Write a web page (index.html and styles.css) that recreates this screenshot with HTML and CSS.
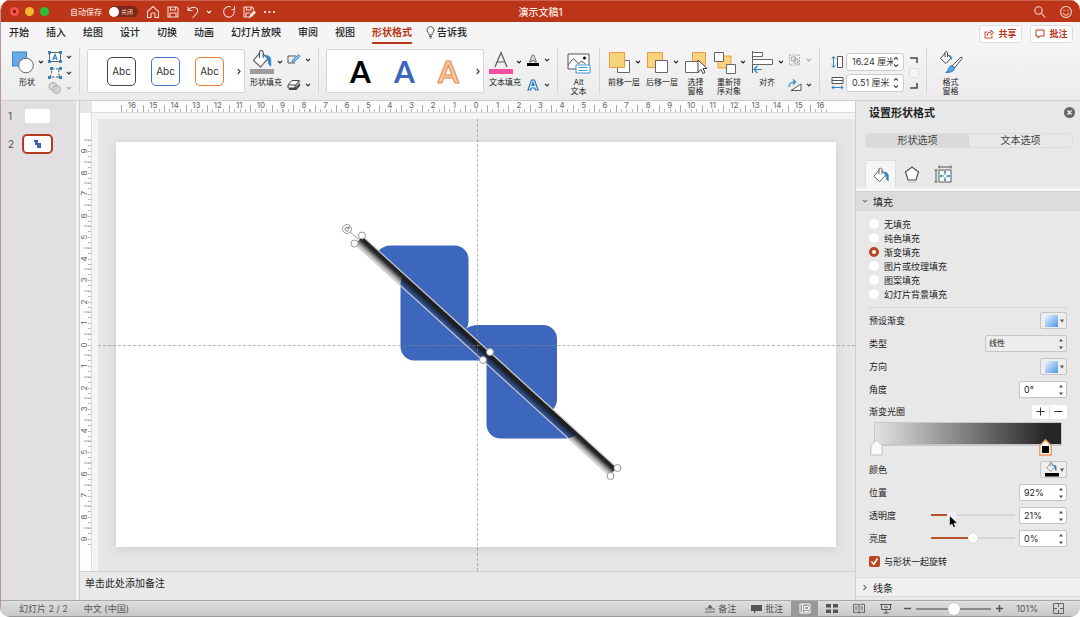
FILE: index.html
```html
<!DOCTYPE html>
<html lang="zh-CN">
<head>
    <meta charset="UTF-8">
    <meta name="viewport" content="width=device-width, initial-scale=1.0">
    <title>演示文稿1</title>
    <link rel="stylesheet" href="styles.css">
</head>
<body>
    <!-- shared icons -->
    <svg class="defs" width="0" height="0" aria-hidden="true">
        <symbol id="caret" viewBox="0 0 6 4"><path d="M1 .8 3 2.8 5 .8" fill="none" stroke="currentColor" stroke-width="1.2"/></symbol>
        <symbol id="bucket" viewBox="0 0 24 18">
            <path d="M10 2.5 3.5 10.5l7 6.5 7.5-8.5-5-4.5" fill="#fafafa" stroke="#555" stroke-width="1.1"/>
            <path d="M9.500 8V2.500q0-2 1.800-2t1.900 2V8" fill="none" stroke="#555" stroke-width="1.1"/>
            <path d="M14.500 5.500q6-.5 6.300 4.500v6q-2.500-1-2.500-4 0-4-3.800-6.500z" fill="#2f86c9" stroke="#2f86c9" stroke-width=".8"/>
        </symbol>
        <symbol id="spin" viewBox="0 0 6 12"><path d="M1 3.500 3 .8 5 3.500zM1 8.500 3 11.200 5 8.500z" fill="#555"/></symbol>
        <symbol id="spin-line" viewBox="0 0 6 12"><path d="M1 3.500 3 1.500 5 3.500M1 8.500 3 10.500 5 8.500" fill="none" stroke="#444" stroke-width="1.100"/></symbol>
        <symbol id="down" viewBox="0 0 4 4"><path d="M0 .5h4L2 3.800z" fill="#555"/></symbol>
    </svg>

    <div class="window">
        <header class="titlebar">
            <div class="lights"><i class="close"></i><i class="min"></i><i class="max"></i></div>
            <span class="autosave">自动保存</span>
            <button class="toggle"><i></i>关闭</button>
            <div class="quick">
                <button aria-label="主页"><svg width="14" height="14" viewBox="0 0 14 14"><path d="M1.500 6.500 7 1.500l5.500 5V12.500h-3.500V9q0-1-1-1H6q-1 0-1 1v3.500H1.500z"/></svg></button>
                <button aria-label="保存"><svg width="14" height="14" viewBox="0 0 14 14"><path d="M2 2h8.500L12 3.500V12H2zM4.500 2v3h5V2M4 12V8h6v4"/></svg></button>
                <button aria-label="撤销"><svg width="14" height="14" viewBox="0 0 14 14"><path d="M2 1.500v4h4.500M2 5.500Q5 1.500 9 2.500t2 5.500L6.500 13"/></svg></button>
                <svg class="quick-caret" width="6" height="4"><use href="#caret"/></svg>
                <button aria-label="重做"><svg width="14" height="14" viewBox="0 0 14 14"><path d="M9 2A5.300 5.300 0 1 0 12 5.500M9.500 4.500H12.500V1"/></svg></button>
                <button aria-label="另存"><svg width="14" height="14" viewBox="0 0 14 14"><path d="M7 12H2V2h8l1.500 1.500V5M4.500 2v3h4.500V2M4 12V8h4"/><path d="m7.500 12.500 1-3 3.500-3.500 1.300 1.500-3.500 3.800z" fill="#fff"/></svg></button>
                <button aria-label="更多"><svg width="14" height="14" viewBox="0 0 14 14"><path d="M2 7h2M6.500 7h2M11 7h2" stroke-width="1.800"/></svg></button>
            </div>
            <h1>演示文稿1</h1>
            <div class="quick right">
                <button aria-label="搜索"><svg width="14" height="14" viewBox="0 0 14 14"><circle cx="5.500" cy="5.500" r="3.700"/><path d="m8.300 8.300 4 4"/></svg></button>
                <button aria-label="反馈"><svg width="14" height="14" viewBox="0 0 14 14"><circle cx="7" cy="7" r="5.500"/><path d="M4 8q3 4.500 6 0M5 4.800v1.400M9 4.800v1.400"/></svg></button>
            </div>
        </header>

        <nav class="tabs">
            <a href="#">开始</a>
            <a href="#">插入</a>
            <a href="#">绘图</a>
            <a href="#">设计</a>
            <a href="#">切换</a>
            <a href="#">动画</a>
            <a href="#">幻灯片放映</a>
            <a href="#">审阅</a>
            <a href="#">视图</a>
            <a href="#" class="active">形状格式</a>
            <a href="#" class="tell"><svg width="9" height="13" viewBox="0 0 9 13"><path d="M3 9Q3 7.500 1.800 6.300A3.500 3.500 0 1 1 7.200 6.300Q6 7.500 6 9zM3 10.500h3M3.500 12h2" fill="none" stroke="#555"/></svg>告诉我</a>
            <div class="share">
                <button><svg width="10" height="10" viewBox="0 0 10 10"><path d="M3.500 3H1v6h7V6.500M3 7q0-4 4-4V1l2.500 3L7 6V4.500" fill="none" stroke="#bc3518" stroke-width=".9"/></svg>共享</button>
                <button><svg width="10" height="10" viewBox="0 0 10 10"><path d="M1 1h8v6H5L3 9V7H1z" fill="none" stroke="#bc3518"/></svg>批注</button>
            </div>
        </nav>

        <section class="ribbon">
            <div class="group">
                <button class="tool">
                    <span class="pic">
                        <svg width="24" height="24" viewBox="0 0 24 24"><rect x="1.500" y="2" width="14" height="14" fill="#67aae6" stroke="#3a86c8"/><circle cx="15" cy="15.500" r="7.300" fill="#fff" stroke="#666"/></svg>
                        <svg width="6" height="4"><use href="#caret"/></svg>
                    </span>
                    形状
                </button>
                <div class="minis three">
                    <button class="mini" aria-label="文本框"><svg width="14" height="12" viewBox="0 0 14 12"><rect x="1.500" y="1.500" width="11" height="9" fill="#fff" stroke="#666"/><path d="M4.800 9 7 3.300 9.200 9M5.500 7.300h3" fill="none" stroke="#2f86c9" stroke-width="1.200"/><path d="M0 0h3v3H0zM11 0h3v3h-3zM0 9h3v3H0zM11 9h3v3h-3z" fill="#2f86c9"/></svg><svg width="6" height="4"><use href="#caret"/></svg></button>
                    <button class="mini" aria-label="编辑形状"><svg width="14" height="12" viewBox="0 0 14 12"><path d="M3.500 2h8.500Q9 5 12 10H1.500q3-3 2-8" fill="#fff" stroke="#555" stroke-dasharray="3 1.500"/><path d="M2 0h3v3H2zM11 0h3v3h-3zM0 9h3v3H0zM11 9h3v3h-3z" fill="#2f86c9"/></svg><svg width="6" height="4"><use href="#caret"/></svg></button>
                    <button class="mini off" aria-label="合并形状"><svg width="14" height="12" viewBox="0 0 14 12"><circle cx="5" cy="4.500" r="4" fill="#ddd" stroke="#aaa"/><circle cx="8.500" cy="7.500" r="4" fill="#ccc" fill-opacity=".6" stroke="#aaa"/></svg><svg width="6" height="4"><use href="#caret"/></svg></button>
                </div>
            </div>

            <div class="group">
                <div class="gallery">
                    <button class="style black">Abc</button>
                    <button class="style blue">Abc</button>
                    <button class="style orange">Abc</button>
                    <svg class="more" width="4" height="7" viewBox="0 0 4 7"><path d="m.8 1 2.200 2.500L.8 6" fill="none" stroke="#444" stroke-width="1.200"/></svg>
                </div>
                <button class="tool">
                    <span class="pic">
                        <svg width="24" height="24" viewBox="0 0 24 24"><use href="#bucket" width="24" height="18"/><path d="M0 19h24v5H0z" fill="#9c9c9c"/></svg>
                        <svg width="6" height="4"><use href="#caret"/></svg>
                    </span>
                    形状填充
                </button>
                <div class="minis">
                    <button class="mini" aria-label="形状轮廓"><svg width="14" height="12" viewBox="0 0 14 12"><path d="M9 2H1v7h7" fill="none" stroke="#555"/><path d="m5 8 1-2.500L11.500.8 13 2.300 7.500 7.500z" fill="#8ec5ee" stroke="#2f86c9"/></svg><svg width="6" height="4"><use href="#caret"/></svg></button>
                    <button class="mini" aria-label="形状效果"><svg width="14" height="12" viewBox="0 0 14 12"><path d="m1 6 4-4.500h7L9 6zM1 6v3h7V6M8 9l4-4.500v-3" fill="#fff" stroke="#444"/><path d="M2 10h7l4-4.500" fill="none" stroke="#444" stroke-width="1.800"/></svg><svg width="6" height="4"><use href="#caret"/></svg></button>
                </div>
            </div>

            <div class="group">
                <div class="gallery">
                    <button class="letter">A</button>
                    <button class="letter blue">A</button>
                    <button class="letter orange">A</button>
                    <svg class="more" width="4" height="7" viewBox="0 0 4 7"><path d="m.8 1 2.200 2.500L.8 6" fill="none" stroke="#444" stroke-width="1.200"/></svg>
                </div>
                <button class="tool">
                    <span class="pic">
                        <svg width="24" height="24" viewBox="0 0 24 24"><path d="M6 17 12 2.500 18 17M8 12h8" fill="none" stroke="#555" stroke-width="1.200"/><path d="M0 19h24v5H0z" fill="#f5509f"/></svg>
                        <svg width="6" height="4"><use href="#caret"/></svg>
                    </span>
                    文本填充
                </button>
                <div class="minis">
                    <button class="mini" aria-label="文本轮廓"><svg width="14" height="12" viewBox="0 0 14 12"><path d="M3.500 8 6.300 1h1.400l2.800 7H8.800l-.5-1.500H5.700L5.200 8z" fill="#ddd" stroke="#555" stroke-width=".8"/><path d="M1 9h12v3H1z"/></svg><svg width="6" height="4"><use href="#caret"/></svg></button>
                    <button class="mini" aria-label="文本效果"><svg width="14" height="12" viewBox="0 0 14 12"><path d="M2 11 5.500 1h3L12 11H9.500L8.800 9H5.200l-.7 2zM6 6.500h2L7 3.500z" fill="#e6f2fb" stroke="#2b78c5" stroke-width="1.200"/></svg><svg width="6" height="4"><use href="#caret"/></svg></button>
                </div>
            </div>

            <div class="group narrow">
                <button class="tool slim">
                    <span class="pic"><svg width="24" height="24" viewBox="0 0 24 24"><path d="M1 4h21v15H1z" fill="#fafafa" stroke="#555"/><path d="m1 15 5.500-6.500 5 5.500 3-3 4 3" fill="none" stroke="#555"/><circle cx="17.500" cy="8" r="1.500"/><path d="M9 15h14v8H9z" fill="#fff" stroke="#3a96d8"/><path d="M11.500 17.500h9M11.500 20.500h9" stroke="#3a96d8"/></svg></span>
                    Alt<br>文本
                </button>
            </div>

            <div class="group">
                <button class="tool">
                    <span class="pic">
                        <svg width="24" height="24" viewBox="0 0 24 24"><path d="M9.500 10.500h12v12h-12z" fill="#fff" stroke="#666"/><path d="M1.500 2.500h15v15h-15z" fill="#f9d27c" stroke="#e99a43"/></svg>
                        <svg width="6" height="4"><use href="#caret"/></svg>
                    </span>
                    前移一层
                </button>
                <button class="tool">
                    <span class="pic">
                        <svg width="24" height="24" viewBox="0 0 24 24"><path d="M1.500 2.500h15v15h-15z" fill="#f9d27c" stroke="#e99a43"/><path d="M9.500 10.500h12v12h-12z" fill="#fff" stroke="#666"/></svg>
                        <svg width="6" height="4"><use href="#caret"/></svg>
                    </span>
                    后移一层
                </button>
                <button class="tool slim">
                    <span class="pic"><svg width="24" height="24" viewBox="0 0 24 24"><path d="M8.500 2.500h13v13h-13z" fill="#f9d27c" stroke="#e99a43"/><path d="M1.500 11.500h13v11h-13z" fill="#fff" stroke="#666"/><path d="M14 10v12l3-2.500 2 4 2-1-2-4h4z" fill="#fff" stroke="#444"/></svg></span>
                    选择<br>窗格
                </button>
                <button class="tool">
                    <span class="pic">
                        <svg width="24" height="24" viewBox="0 0 24 24"><path d="M5 6h13v12H5z" fill="#f9d27c" stroke="#e99a43"/><path d="M1.500 2.500h9v9h-9zM13.500 14.500h9v9h-9z" fill="#fff" stroke="#666"/></svg>
                        <svg width="6" height="4"><use href="#caret"/></svg>
                    </span>
                    重新排<br>序对象
                </button>
                <button class="tool">
                    <span class="pic">
                        <svg width="24" height="24" viewBox="0 0 24 24"><path d="M1.500 1v22" stroke="#555"/><path d="M1.500 2.500h10v4h-10zM1.500 9.500h20v5h-20z" fill="#fff" stroke="#666"/><path d="M11 19.500H3M6.500 16 3 19.500 6.500 23" fill="none" stroke="#2f86c9" stroke-width="1.200"/></svg>
                        <svg width="6" height="4"><use href="#caret"/></svg>
                    </span>
                    对齐
                </button>
                <div class="minis">
                    <button class="mini off" aria-label="组合"><svg width="14" height="12" viewBox="0 0 14 12"><path d="M1.500 1h10v10h-10z" fill="none" stroke="#aaa" stroke-dasharray="2 1"/><path d="M3.500 3h4v4h-4zM6 5h4v4H6z" fill="none" stroke="#aaa"/></svg><svg width="6" height="4"><use href="#caret"/></svg></button>
                    <button class="mini" aria-label="旋转"><svg width="14" height="12" viewBox="0 0 14 12"><path d="M3 11.500h10V5z" fill="#fff" stroke="#555"/><path d="M1 8q0-5 6-5M5 .5 7.500 3 5 5.500" fill="none" stroke="#2f86c9" stroke-width="1.200"/></svg><svg width="6" height="4"><use href="#caret"/></svg></button>
                </div>
            </div>

            <div class="group">
                <div class="sizes">
                    <label for="shapeHeight" aria-label="高度"><svg width="13" height="14" viewBox="0 0 13 14"><path d="M6.500 1.500h5v11h-5z" fill="#fff" stroke="#555"/><path d="M2.500 2v10M.8 3.800 2.500 1.500l1.700 2.300M.8 10.200l1.700 2.300 1.700-2.300" fill="none" stroke="#2f86c9"/></svg></label>
                    <span class="measure"><input id="shapeHeight" type="text" value="16.24 厘米"><svg width="6" height="12"><use href="#spin-line"/></svg></span>
                    <label for="shapeWidth" aria-label="宽度"><svg width="13" height="14" viewBox="0 0 13 14"><path d="M1 1.500h11v6H1zM1 4.500h11" fill="#fff" stroke="#555"/><path d="M1 11.500h11M3 9.800.8 11.500 3 13.200M10 9.800l2.200 1.700-2.200 1.700" fill="none" stroke="#2f86c9"/></svg></label>
                    <span class="measure"><input id="shapeWidth" type="text" value="0.51 厘米"><svg width="6" height="12"><use href="#spin-line"/></svg></span>
                </div>
                <div class="ratio">
                    <svg width="8" height="6" viewBox="0 0 8 6"><path d="M0 1h7v5" fill="none" stroke="#444" stroke-width="1.500"/></svg>
                    <input type="checkbox" aria-label="锁定纵横比">
                    <svg width="8" height="6" viewBox="0 0 8 6"><path d="M0 5h7V0" fill="none" stroke="#444" stroke-width="1.500"/></svg>
                </div>
            </div>

            <div class="group last">
                <button class="tool slim">
                    <span class="pic"><svg width="24" height="24" viewBox="0 0 24 24"><path d="M6 3 1.500 8.500 7 13.500 12 8 8 4" fill="#fff" stroke="#444"/><path d="M6 7V2.500Q7 0 8.500 2.500V7" fill="none" stroke="#444"/><path d="M10 5q3 0 3 5l-2-2z" fill="#2f86c9"/><path d="m13 16 9-9q1.500 0 1 1.500L15.500 18z" fill="#fff" stroke="#555"/><path d="M13 15.500q2.500.5 2.500 3-1 4-8.500 4 2-1.500 2.500-4 1-2.500 3.500-3z" fill="#5aa6e6" stroke="#2774b8"/></svg></span>
                    格式<br>窗格
                </button>
            </div>
        </section>

        <div class="body">
            <aside class="thumbs">
                <a href="#"><span>1</span><i></i></a>
                <a href="#" class="selected"><span>2</span><i><svg width="9" height="8" viewBox="0 0 9 8"><path d="M1 0h4v3h3v5H4V5H2V2H1z" fill="#3c66bd"/></svg></i></a>
            </aside>

            <main class="editor">
                <div class="corner"></div>
                <div class="ruler across">
                    <span>16</span><span>15</span><span>14</span><span>13</span><span>12</span><span>11</span><span>10</span><span>9</span><span>8</span><span>7</span><span>6</span><span>5</span><span>4</span><span>3</span><span>2</span><span>1</span><span>0</span><span>1</span><span>2</span><span>3</span><span>4</span><span>5</span><span>6</span><span>7</span><span>8</span><span>9</span><span>10</span><span>11</span><span>12</span><span>13</span><span>14</span><span>15</span><span>16</span>
                </div>
                <div class="ruler down">
                    <span>9</span><span>8</span><span>7</span><span>6</span><span>5</span><span>4</span><span>3</span><span>2</span><span>1</span><span>0</span><span>1</span><span>2</span><span>3</span><span>4</span><span>5</span><span>6</span><span>7</span><span>8</span><span>9</span>
                </div>
                <div class="workspace">
                    <div class="slide">
                        <svg viewBox="116 142 720 405" width="100%" height="100%">
                            <defs>
                                <linearGradient id="barFill" x1="0" y1="0" x2="0" y2="1">
                                    <stop offset="0" stop-color="#222"/>
                                    <stop offset=".35" stop-color="#1a1a1a" stop-opacity=".95"/>
                                    <stop offset=".65" stop-color="#111" stop-opacity=".5"/>
                                    <stop offset="1" stop-color="#111" stop-opacity=".1"/>
                                </linearGradient>
                            </defs>
                            <g fill="#3d67bd">
                                <path d="M378.500 251Q383 245.500 391 245.500H454.500a14 14 0 0 1 14 14V322q0 4-2.500 6.500L490 350 484 360.500H414.500a14 14 0 0 1-14-14V284q0-5 3-9z"/>
                                <path d="M466 328.500Q471 325 478 325H543a14 14 0 0 1 14 14V399q0 6-4 10.500L577 433q-5 5.500-11 5.500H500.500a14 14 0 0 1-14-14V362L484 360.500z"/>
                            </g>
                            <g transform="translate(486 356) rotate(42.300)">
                                <rect x="-172" y="-5.500" width="344" height="11" fill="url(#barFill)"/>
                                <path d="M-172-5.500H172M-172 5.500H172" stroke="#ccc" stroke-width="1.200"/>
                            </g>
                            <path d="m350 232 9 7.500" stroke="#999"/>
                            <g fill="#fff" stroke="#999">
                                <circle cx="347" cy="229" r="4.500"/>
                                <path d="M348.800 228A2 2 0 1 0 348.800 230.200M349.200 226.500v2h-2" fill="none" stroke="#777"/>
                                <circle cx="362" cy="235.500" r="3.500"/>
                                <circle cx="354.500" cy="243.500" r="3.500"/>
                                <circle cx="490" cy="352" r="3.500"/>
                                <circle cx="483" cy="360" r="3.500"/>
                                <circle cx="617.500" cy="468" r="3.500"/>
                                <circle cx="610.500" cy="476" r="3.500"/>
                            </g>
                        </svg>
                    </div>
                    <i class="guide-v"></i>
                    <i class="guide-h"></i>
                </div>
                <div class="notes">单击此处添加备注</div>
            </main>

            <aside class="panel">
                <div class="panel-head">
                    <h2>设置形状格式</h2>
                    <button aria-label="关闭"><svg width="11" height="11" viewBox="0 0 11 11"><circle cx="5.500" cy="5.500" r="5.500" fill="#666"/><path d="m3.500 3.500 4 4M7.500 3.500l-4 4" stroke="#fff" stroke-width="1.200"/></svg></button>
                </div>
                <div class="segments">
                    <button class="on">形状选项</button>
                    <button>文本选项</button>
                </div>
                <div class="icon-tabs">
                    <button class="on" aria-label="填充与线条"><svg width="20" height="16" viewBox="0 0 24 18"><use href="#bucket"/></svg></button>
                    <button aria-label="效果"><svg width="16" height="17" viewBox="0 0 16 17"><path d="m8 1 6.500 5L12 14H4L1.500 6z" fill="#fafafa" stroke="#555" stroke-width="1.200"/><path d="M4 16h8" stroke="#bbb"/></svg></button>
                    <button aria-label="大小与属性"><svg width="18" height="18" viewBox="0 0 18 18"><path d="M5 5h12v12H5z" fill="#fff" stroke="#555"/><path d="M5 2h12M5 .5v3M17 .5v3M2 5v12M.5 5h3M.5 17h3" stroke="#555"/><path d="M11 6v4M11 12v4M6 11h4M12 11h4" stroke="#2f86c9"/><path d="m11 5.800 1.700 2H9.300zM11 16.200l1.700-2H9.300zM5.800 11l2-1.700v3.400zM16.200 11l-2-1.700v3.400z" fill="#2f86c9"/></svg></button>
                </div>

                <button class="section"><svg width="6" height="4"><use href="#caret"/></svg>填充</button>
                <div class="fill-kinds">
                    <label><input type="radio" name="fill">无填充</label>
                    <label><input type="radio" name="fill">纯色填充</label>
                    <label><input type="radio" name="fill" checked>渐变填充</label>
                    <label><input type="radio" name="fill">图片或纹理填充</label>
                    <label><input type="radio" name="fill">图案填充</label>
                    <label><input type="radio" name="fill">幻灯片背景填充</label>
                </div>

                <div class="rows">
                    <div class="row"><span>预设渐变</span><button class="swatch" aria-label="预设渐变"><i></i><svg width="4" height="4"><use href="#down"/></svg></button></div>
                    <div class="row"><label for="gradType">类型</label><span class="drop"><select id="gradType"><option>线性</option></select><svg width="6" height="12"><use href="#spin"/></svg></span></div>
                    <div class="row"><span>方向</span><button class="swatch" aria-label="方向"><i></i><svg width="4" height="4"><use href="#down"/></svg></button></div>
                    <div class="row"><label for="angle">角度</label><span class="stepper"><input id="angle" type="text" value="0°"><svg width="6" height="12"><use href="#spin"/></svg></span></div>
                    <div class="row short"><span>渐变光圈</span><span class="plusminus"><button aria-label="添加"><svg width="9" height="9" viewBox="0 0 9 9"><path d="M.5 4.500h8M4.500.5v8" stroke="#333"/></svg></button><button aria-label="删除"><svg width="9" height="9" viewBox="0 0 9 9"><path d="M.5 4.500h8" stroke="#333"/></svg></button></span></div>
                </div>

                <div class="ramp">
                    <button class="stop first" aria-label="光圈 1"><svg width="13" height="17" viewBox="0 0 13 17"><path d="M.8 6.500 6.500.8l5.700 5.700V16H.8z" fill="#fafafa" stroke="#bbb"/></svg></button>
                    <button class="stop second" aria-label="光圈 2"><svg width="13" height="17" viewBox="0 0 13 17"><path d="M.8 6.500 6.500.8l5.700 5.700V16H.8z" fill="#fff" stroke="#ee935a" stroke-width="1.400"/><path d="M3 7h7v7H3z"/></svg></button>
                </div>

                <div class="rows lower">
                    <div class="row"><span>颜色</span><button class="swatch" aria-label="颜色"><svg width="15" height="15" viewBox="0 0 15 15"><use href="#bucket" width="13" height="10"/><path d="M0 11h14v3.500H0z"/></svg><svg width="4" height="4"><use href="#down"/></svg></button></div>
                    <div class="row"><label for="pos">位置</label><span class="stepper"><input id="pos" type="text" value="92%"><svg width="6" height="12"><use href="#spin"/></svg></span></div>
                    <div class="row">
                        <label for="alpha">透明度</label>
                        <span class="slide-wrap">
                            <input id="alpha" class="faint" type="range" value="21" style="--fill: 21%">
                            <svg class="pointer" width="9" height="13" viewBox="0 0 9 13"><path d="M.5.500v10.500L3 9l1.500 3.500 2-.8L5 8.300h3.500z" stroke="#fff" stroke-width=".6"/></svg>
                        </span>
                        <span class="stepper"><input type="text" value="21%" aria-label="透明度"><svg width="6" height="12"><use href="#spin"/></svg></span>
                    </div>
                    <div class="row">
                        <label for="light">亮度</label>
                        <span class="slide-wrap"><input id="light" type="range" value="50" style="--fill: 50%"></span>
                        <span class="stepper"><input type="text" value="0%" aria-label="亮度"><svg width="6" height="12"><use href="#spin"/></svg></span>
                    </div>
                    <label class="check"><input type="checkbox" checked><svg width="11" height="11" viewBox="0 0 11 11"><path d="m2.500 5.500 2.300 2.700L8.500 2.500" fill="none" stroke="#fff" stroke-width="1.700"/></svg>与形状一起旋转</label>
                </div>
                <button class="section closed"><svg width="6" height="7" viewBox="0 0 6 7"><path d="m1.500 1 2.500 2.500L1.500 6" fill="none" stroke="currentColor" stroke-width="1.200"/></svg>线条</button>
            </aside>
        </div>

        <footer class="status">
            <span>幻灯片 2 / 2</span>
            <span>中文 (中国)</span>
            <div class="views">
                <button class="text"><svg width="10" height="9" viewBox="0 0 10 9"><path d="M0 5h10M0 8h10M3 3.500h4L5 1z" fill="#666" stroke="#666"/></svg>备注</button>
                <button class="text"><svg width="11" height="10" viewBox="0 0 11 10"><path d="M0 1h11v6H5L3 9.500V7H0z" fill="#555"/></svg>批注</button>
                <button class="view on" aria-label="普通视图"><svg width="12" height="11" viewBox="0 0 12 11"><path d="M1 1h10v9H1zM3.500 1v9M5.500 3.500h4v3h-4zM5.500 8.500h4" fill="none" stroke="#fff"/></svg></button>
                <button class="view" aria-label="浏览"><svg width="12" height="9" viewBox="0 0 12 9"><path d="M0 0h5v3.500H0zM7 0h5v3.500H7zM0 5.500h5V9H0zM7 5.500h5V9H7z" fill="#555"/></svg></button>
                <button class="view" aria-label="阅读"><svg width="12" height="11" viewBox="0 0 12 11"><path d="M6 2Q3.500.5.5 1.500v8Q3.500 8.500 6 10q2.500-1.500 5.500-.5v-8Q8.500.5 6 2zv8M2 4h2.500M2 6h2.500M7.500 4H10M7.500 6H10" fill="none" stroke="#666"/></svg></button>
                <button class="view" aria-label="放映"><svg width="12" height="11" viewBox="0 0 12 11"><path d="M0 1.500h12M1.500 1.500v5h9v-5M6 6.500V10M3.500 10h5M4 4h4" fill="none" stroke="#555"/></svg></button>
                <div class="zoom">
                    <button aria-label="缩小"><svg width="7" height="7" viewBox="0 0 7 7"><path d="M0 3.500h7" stroke="#555" stroke-width="1.500"/></svg></button>
                    <input type="range" value="50" aria-label="缩放">
                    <button aria-label="放大"><svg width="7" height="7" viewBox="0 0 7 7"><path d="M0 3.500h7M3.500 0v7" stroke="#555" stroke-width="1.500"/></svg></button>
                </div>
                <span class="percent">101%</span>
                <button aria-label="适应窗口"><svg width="11" height="11" viewBox="0 0 11 11"><path d="M.5.500h10v10H.5zM5.500 1v3M5.500 7v3M1 5.500h3M7 5.500h3" fill="none" stroke="#666"/></svg></button>
            </div>
        </footer>
    </div>
</body>
</html>
```

FILE: styles.css
```css
* {
    box-sizing: border-box;
}
body {
    margin: 0;
    background: #fff;
    color: #222;
    font-family: "Inter", "Noto Sans CJK SC", sans-serif;
    font-size: 9px;
}
button, input, select {
    font: inherit;
    color: inherit;
    margin: 0;
    padding: 0;
    border: 0;
    background: none;
}
a {
    color: inherit;
    text-decoration: none;
}
h1, h2 {
    margin: 0;
}
svg {
    display: block;
    flex: none;
}
.defs {
    position: absolute;
}
.window {
    display: flex;
    flex-direction: column;
    height: 100vh;
    border-left: 1px solid #b795a3;
    border-radius: 10px;
    overflow: hidden;
    background: #e8e8e8;
}

/* title bar */
.titlebar {
    display: flex;
    align-items: center;
    position: relative;
    flex: none;
    height: 22px;
    padding: 0 7px 0 9px;
    background: #bc3518;
    border-top: 1px solid #c9634c;
    color: #f5d5cc;
}
.lights {
    display: flex;
    gap: 6px;
}
.lights i {
    width: 9px;
    height: 9px;
    border-radius: 50%;
}
.lights .close {
    background: radial-gradient(#7a0f08 0 1px, #f4524a 2px);
}
.lights .min {
    background: #f6b62b;
}
.lights .max {
    background: #27bf38;
}
.autosave {
    margin-left: 21px;
    font-size: 8px;
    font-weight: 500;
}
.toggle {
    display: flex;
    align-items: center;
    gap: 2px;
    width: 29px;
    height: 11px;
    margin-left: 7px;
    border-radius: 6px;
    background: #7b2818;
    font-size: 6px;
    line-height: 11px;
}
.toggle i {
    width: 10px;
    height: 10px;
    border-radius: 50%;
    background: #fff;
}
.quick {
    display: flex;
    align-items: center;
    gap: 6px;
    margin-left: 8px;
}
.quick button svg {
    fill: none;
    stroke: #f6d8d0;
    stroke-width: 1.1;
}
.quick-caret {
    margin-right: 4px;
    color: #fff;
}
.quick.right {
    gap: 12px;
    margin-left: auto;
}
.titlebar h1 {
    position: absolute;
    left: 50%;
    transform: translateX(-50%);
    color: #fbe9e4;
    font-size: 10px;
    font-weight: 500;
}

/* tabs */
.tabs {
    display: flex;
    align-items: center;
    flex: none;
    gap: 17px;
    height: 23px;
    padding: 0 7px 0 8px;
    background: #f5f5f5;
    font-size: 10px;
    font-weight: 500;
    line-height: 19px;
}
.tabs a {
    border-bottom: 2px solid transparent;
}
.tabs .active {
    color: #bc3518;
    border-color: #bc3518;
    font-weight: 700;
}
.tell {
    display: flex;
    align-items: center;
    gap: 2px;
    margin-left: -3px;
}
.share {
    display: flex;
    gap: 8px;
    margin-left: auto;
}
.share button {
    display: flex;
    align-items: center;
    justify-content: center;
    gap: 4px;
    width: 43px;
    height: 18px;
    border: 1px solid #ddd;
    border-radius: 3px;
    background: #fff;
    color: #bc3518;
    font-size: 9px;
    font-weight: 700;
}

/* ribbon */
.ribbon {
    display: flex;
    flex: none;
    height: 56px;
    padding: 3px 0 6px 2px;
    background: linear-gradient(#f5f5f5, #ebebeb);
    border-bottom: 1px solid #cfcfcf;
    color: #333;
}
.group {
    display: flex;
    gap: 4px;
    padding: 0 7px;
    border-right: 1px solid #d6d6d6;
}
.group.last {
    border: 0;
    padding-left: 11px;
}
.group.narrow {
    padding: 0 8px;
}
.tool {
    display: flex;
    flex-direction: column;
    align-items: center;
    justify-content: flex-start;
    width: 34px;
    color: #222;
    font-size: 8px;
    line-height: 9px;
    white-space: nowrap;
}
.tool.slim {
    width: 25px;
}
.pic {
    display: flex;
    align-items: center;
    gap: 3px;
    margin: 2px 0 4px;
}
.minis {
    display: flex;
    flex-direction: column;
    justify-content: space-between;
    padding: 6px 0 3px;
}
.minis.three {
    padding: 3px 0 0;
}
.mini {
    display: flex;
    align-items: center;
    gap: 4px;
}
.mini.off {
    color: #aaa;
}
.gallery {
    display: flex;
    align-items: center;
    gap: 15px;
    width: 158px;
    height: 44px;
    margin-top: 1px;
    padding: 0 4px 0 19px;
    border: 1px solid #d5d5d5;
    border-radius: 2px;
    background: #fff;
}
.more {
    margin-left: auto;
}
.gallery button {
    flex: none;
    width: 29px;
}
.gallery .orange + .more {
    margin-left: -2px;
}
.style {
    height: 29px;
    border: 1px solid #444;
    border-radius: 5px;
    color: #333;
    font-size: 10px;
}
.style.blue {
    border-color: #4472c4;
}
.style.orange {
    border-color: #ed7d31;
}
.letter {
    color: #000;
    font-family: "Lato", sans-serif;
    font-size: 30px;
    font-weight: 700;
    line-height: 42px;
}
.letter.blue {
    color: #3d67bd;
}
.letter.orange {
    color: #f8c8a4;
    -webkit-text-stroke: 1px #ee8344;
}
.sizes {
    display: grid;
    grid-template-columns: 13px 58px;
    align-content: center;
    align-items: center;
    gap: 3px 2px;
    padding: 2px 0 0 4px;
}
.measure {
    display: flex;
    align-items: center;
    height: 18px;
    padding: 0 4px 0 5px;
    border: 1px solid #ccc;
    border-radius: 3px;
    background: #fff;
}
.measure input {
    flex: 1;
    min-width: 0;
    width: 0;
    font-size: 9px;
}
.ratio {
    display: flex;
    flex-direction: column;
    align-items: center;
    justify-content: space-between;
    width: 11px;
    padding: 9px 0 5px;
}
.ratio input {
    appearance: none;
    width: 10px;
    height: 10px;
    border: 1px solid #ddd;
    border-radius: 2px;
    background: #f5f5f5;
}

/* body */
.body {
    display: grid;
    grid-template-columns: 78px 1fr 225px;
    flex: 1;
    min-height: 0;
}
.thumbs {
    display: flex;
    flex-direction: column;
    gap: 8px;
    padding: 5px 7px;
    background: #e2dfe3;
    border-right: 3px solid #f3f3f3;
}
.thumbs a {
    display: flex;
    align-items: center;
    gap: 7px;
    color: #555;
    font-size: 10px;
}
.thumbs span {
    width: 7px;
}
.thumbs i {
    display: flex;
    align-items: center;
    justify-content: center;
    width: 31px;
    height: 20px;
    border: 2px solid transparent;
    border-radius: 5px;
    background: #fff content-box;
    padding: 1px;
}
.thumbs .selected i {
    border-color: #b63a20;
    background: #fff;
}
.editor {
    display: grid;
    grid-template-columns: 12px 1fr;
    grid-template-rows: 12px 1fr 29px;
    min-width: 0;
    border-left: 1px solid #ccc;
}
.corner {
    background: #e6e6e6;
}
.ruler {
    display: flex;
    background: #fdfdfd;
    color: #666;
    font-size: 8px;
    line-height: 8px;
    text-align: center;
}
.ruler span {
    flex: 1 1 0;
    min-width: 0;
    min-height: 0;
}
.across {
    padding: 0 24px 0 29px;
    border-bottom: 1px solid #ddd;
}
.across span {
    background:
        linear-gradient(#aaa, #aaa) 0 100% / 1px 7px no-repeat,
        repeating-linear-gradient(90deg, #bbb 0 1px, transparent 1px 25%) 0 100% / 100% 3px no-repeat;
}
.down {
    flex-direction: column;
    padding: 27px 0 22px;
    border-right: 1px solid #ddd;
}
.down span {
    writing-mode: vertical-rl;
    transform: rotate(180deg);
    background:
        linear-gradient(#aaa, #aaa) 0 100% / 7px 1px no-repeat,
        repeating-linear-gradient(0deg, #bbb 0 1px, transparent 1px 25%) 0 0 / 3px 100% no-repeat;
}
.workspace {
    display: flex;
    position: relative;
    min-height: 0;
    padding: 23px 19px 24px 18px;
    border: solid #f4f4f4;
    border-width: 6px 0 0 6px;
    background: #e6e6e6;
}
.slide {
    flex: 1;
    min-width: 0;
    background: #fff;
    box-shadow: 0 2px 10px #ccc;
}
.guide-v, .guide-h {
    position: absolute;
    opacity: .6;
}
.guide-v {
    top: 0;
    bottom: 0;
    left: 50%;
    border-left: 1px dashed #888;
}
.guide-h {
    top: 50%;
    left: 0;
    right: 0;
    border-top: 1px dashed #888;
}
.notes {
    grid-column: 1 / 3;
    padding-left: 5px;
    border-top: 1px solid #cfcfcf;
    background: #e9e9e9;
    font-size: 10px;
    line-height: 23px;
}

/* format panel */
.panel {
    display: flex;
    flex-direction: column;
    min-width: 0;
    border-left: 1px solid #cfcfcf;
    background: #e8e8e8;
}
.panel-head {
    display: flex;
    align-items: center;
    justify-content: space-between;
    height: 22px;
    padding: 0 5px 0 13px;
}
.panel h2 {
    font-size: 11px;
    font-weight: 700;
}
.segments {
    display: flex;
    height: 15px;
    margin: 10px 7px 0 9px;
    border: 1px solid #ddd;
    border-radius: 4px;
    overflow: hidden;
}
.segments button {
    flex: 1;
    color: #444;
    font-size: 10px;
    line-height: 13px;
}
.segments .on {
    background: #dadada;
}
.icon-tabs {
    display: flex;
    height: 31px;
    margin-top: 12px;
    padding-left: 9px;
    border-bottom: 3px solid #f6f6f6;
}
.icon-tabs button {
    display: flex;
    align-items: center;
    justify-content: center;
    width: 31px;
}
.icon-tabs .on {
    border: 1px solid #ddd;
    border-bottom: 0;
    background: #f6f6f6;
}
.section {
    display: flex;
    align-items: center;
    flex: none;
    gap: 5px;
    height: 20px;
    padding-left: 6px;
    border-top: 1px solid #d5d5d5;
    border-bottom: 1px solid #d2d2d2;
    background: #dcdcdc;
    font-size: 10px;
}
.section svg {
    color: #777;
}
.fill-kinds {
    display: flex;
    flex-direction: column;
    margin: 6px 13px 0;
    padding-bottom: 6px;
    border-bottom: 1px solid #d3d3d3;
}
.fill-kinds label {
    display: flex;
    align-items: center;
    gap: 5px;
    height: 14px;
}
.fill-kinds input {
    appearance: none;
    width: 10px;
    height: 10px;
    border-radius: 50%;
    background: #fff;
}
.fill-kinds input:checked {
    border: 3px solid #b9461f;
}
.rows {
    padding: 1px 13px 0;
}
.row {
    display: flex;
    align-items: center;
    justify-content: space-between;
    height: 23px;
}
.row.short {
    height: 21px;
}
.swatch {
    display: flex;
    align-items: center;
    justify-content: space-between;
    width: 27px;
    height: 17px;
    padding: 0 2px 0 4px;
    border: 1px solid #c6c6c6;
    border-radius: 2px;
    background: #eee;
}
.swatch i {
    width: 13px;
    height: 12px;
    background: linear-gradient(135deg, #eef6ff, #4d94e4);
}
.drop {
    display: flex;
    align-items: center;
    width: 82px;
    height: 17px;
    padding: 0 2px 0 3px;
    border: 1px solid #c6c6c6;
    border-radius: 2px;
    background: #ececec;
}
.drop select {
    appearance: none;
    flex: 1;
    font-size: 8px;
    line-height: 15px;
}
.stepper {
    display: flex;
    align-items: center;
    width: 48px;
    height: 17px;
    padding: 0 2px 0 4px;
    border: 1px solid #c4c4c4;
    border-radius: 2px;
    background: #fff;
}
.stepper input {
    flex: 1;
    width: 0;
    min-width: 0;
}
.plusminus {
    display: flex;
    width: 35px;
    height: 14px;
    border-radius: 3px;
    background: #fff;
}
.plusminus button {
    display: flex;
    align-items: center;
    justify-content: center;
    flex: 1;
}
.plusminus button + button {
    border-left: 1px solid #e3e3e3;
}
.ramp {
    position: relative;
    flex: none;
    height: 24px;
    margin: 0 18px;
    border: 1px solid #c8c8c8;
    border-bottom-width: 2px;
    background: linear-gradient(90deg, #e2e2e2, #262626 92%);
}
.stop {
    position: absolute;
    top: 16px;
}
.stop.first {
    left: -5px;
}
.stop.second {
    left: 92%;
    margin-left: -7px;
}
.rows.lower {
    padding-top: 12px;
}
.lower label {
    flex: none;
}
.slide-wrap {
    position: relative;
    width: 84px;
    height: 12px;
    margin: 0 4px 0 auto;
}
input[type="range"] {
    appearance: none;
    display: block;
    width: 100%;
    height: 10px;
    background: linear-gradient(90deg, #b9512d var(--fill, 0%), #d5d5d5 0) center / 100% 2px no-repeat;
}
input[type="range"]::-webkit-slider-thumb {
    appearance: none;
    width: 10px;
    height: 10px;
    border-radius: 50%;
    background: #fff;
    box-shadow: 0 0 1px #999;
}
input.faint::-webkit-slider-thumb {
    background: #efefef;
    box-shadow: none;
}
.pointer {
    position: absolute;
    top: 5px;
    left: 18px;
}
.check {
    display: flex;
    align-items: center;
    gap: 4px;
    position: relative;
    height: 22px;
}
.check input {
    appearance: none;
    width: 11px;
    height: 11px;
    border-radius: 2px;
    background: #b9461f;
}
.check svg {
    position: absolute;
    left: 0;
}
.section.closed {
    margin-top: 5px;
    background: #f0f0f0;
    border-color: #ddd;
}

/* status bar */
.status {
    display: flex;
    align-items: center;
    flex: none;
    gap: 16px;
    height: 17px;
    padding: 0 16px 0 18px;
    border-top: 1px solid #aaa;
    border-bottom: 1px solid #999;
    background: linear-gradient(#dedede, #c8c8c8);
    color: #555;
}
.views {
    display: flex;
    align-items: center;
    height: 100%;
    margin-left: auto;
}
.views .text {
    display: flex;
    align-items: center;
    gap: 3px;
    margin-right: 15px;
}
.views .text + .text {
    margin-right: 8px;
}
.view {
    display: flex;
    align-items: center;
    justify-content: center;
    width: 27px;
    height: 100%;
}
.view.on {
    background: #999;
}
.zoom {
    display: flex;
    align-items: center;
    gap: 5px;
    margin-left: 5px;
}
.zoom input[type="range"] {
    width: 75px;
    height: 12px;
    background: linear-gradient(#8b8b8b, #8b8b8b) center / 100% 2px no-repeat;
}
.zoom input[type="range"]::-webkit-slider-thumb {
    width: 12px;
    height: 12px;
}
.percent {
    margin: 0 15px 0 13px;
}
```
